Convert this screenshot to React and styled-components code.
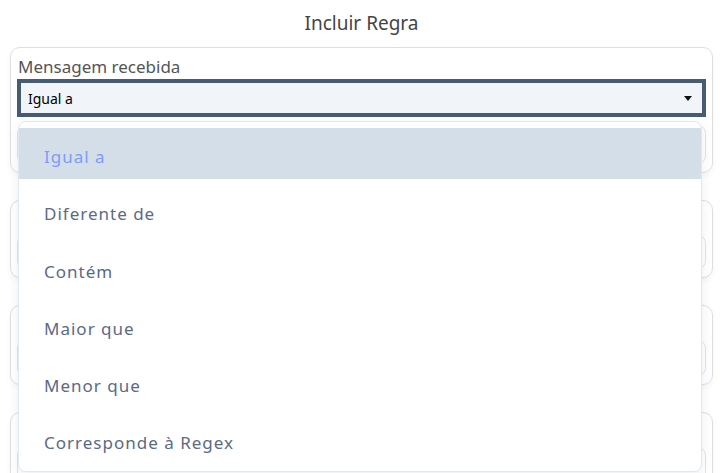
import React from 'react'
import styled, { createGlobalStyle } from 'styled-components'

const GlobalStyle = createGlobalStyle`
	html, body {
		margin: 0;
		padding: 0;
		background: #fff;
		font-family: "Noto Sans", "Open Sans", sans-serif;
		overflow: hidden;
	}
`

const Page = styled.div`
	width: 723px;
	height: 473px;
	padding: 0 10px;
	box-sizing: border-box;
`

const Title = styled.h2`
	margin: 0;
	height: 47px;
	display: flex;
	align-items: center;
	justify-content: center;
	font-size: 19px;
	font-weight: 400;
	color: #454545;
	padding-bottom: 2px;
	box-sizing: border-box;
`

const CardList = styled.div`
	display: flex;
	flex-direction: column;
	gap: 27px;
`

const Card = styled.div`
	position: relative;
	height: ${p => p.h}px;
	border: 1px solid #dedede;
	border-radius: 10px;
	box-shadow: 0 3px 6px rgba(0, 0, 0, 0.04);
	padding: 7px 6px 8px;
	box-sizing: border-box;
	display: flex;
	flex-direction: column;
`

const Label = styled.div`
	font-size: 17px;
	line-height: 24px;
	color: #555;
	padding-left: 1px;
`

const SelectWrap = styled.div`
	position: relative;
`

const Select = styled.div`
	height: 38px;
	border: 4px solid #475b75;
	background: #f1f4f9;
	box-sizing: border-box;
	display: flex;
	align-items: center;
	justify-content: space-between;
	padding: 0 10px 0 7px;
	font-family: "Noto Sans", sans-serif;
	font-size: 14px;
	color: #000;
`

const Caret = styled.span`
	width: 0;
	height: 0;
	border-left: 4px solid transparent;
	border-right: 4px solid transparent;
	border-top: 5px solid #111;
`

const Field = styled.div`
	margin-top: ${p => p.mt || 8}px;
	height: ${p => p.h || 37}px;
	border: 1px solid #e1e4ea;
	border-radius: 8px;
	background: #fff;
`

const Dropdown = styled.ul`
	position: absolute;
	top: 42px;
	left: 1px;
	width: 684px;
	margin: 0;
	padding: 6px 0 0;
	list-style: none;
	background: #fff;
	border: 1px solid #e2e8f0;
	border-radius: 8px;
	box-shadow: 0 4px 12px rgba(30, 50, 80, 0.08);
	box-sizing: border-box;
	height: 351px;
	overflow: hidden;
	z-index: 10;
`

const Option = styled.li`
	height: 51px;
	margin-bottom: 6.3px;
	padding: 17px 0 0 25px;
	box-sizing: border-box;
	line-height: 24px;
	font-size: 17px;
	letter-spacing: 1px;
	color: ${p => (p.active ? '#7f9cf5' : '#5b6a84')};
	background: ${p => (p.active ? '#d4dee8' : 'transparent')};
`

const options = ['Igual a', 'Diferente de', 'Contém', 'Maior que', 'Menor que', 'Corresponde à Regex']

export default function App() {
	return (
		<Page>
			<GlobalStyle />
			<Title>Incluir Regra</Title>
			<CardList>
				<Card h={126}>
					<Label>Mensagem recebida</Label>
					<SelectWrap>
						<Select>
							<span>Igual a</span>
							<Caret />
						</Select>
						<Dropdown>
							{options.map((o, i) => (
								<Option key={o} active={i === 0}>{o}</Option>
							))}
						</Dropdown>
					</SelectWrap>
					<Field />
				</Card>
				<Card h={78}>
					<Field mt={27} h={34} />
				</Card>
				<Card h={80}>
					<Field mt={27} h={36} />
				</Card>
				<Card h={80}>
					<Field mt={27} h={36} />
				</Card>
			</CardList>
		</Page>
	)
}
